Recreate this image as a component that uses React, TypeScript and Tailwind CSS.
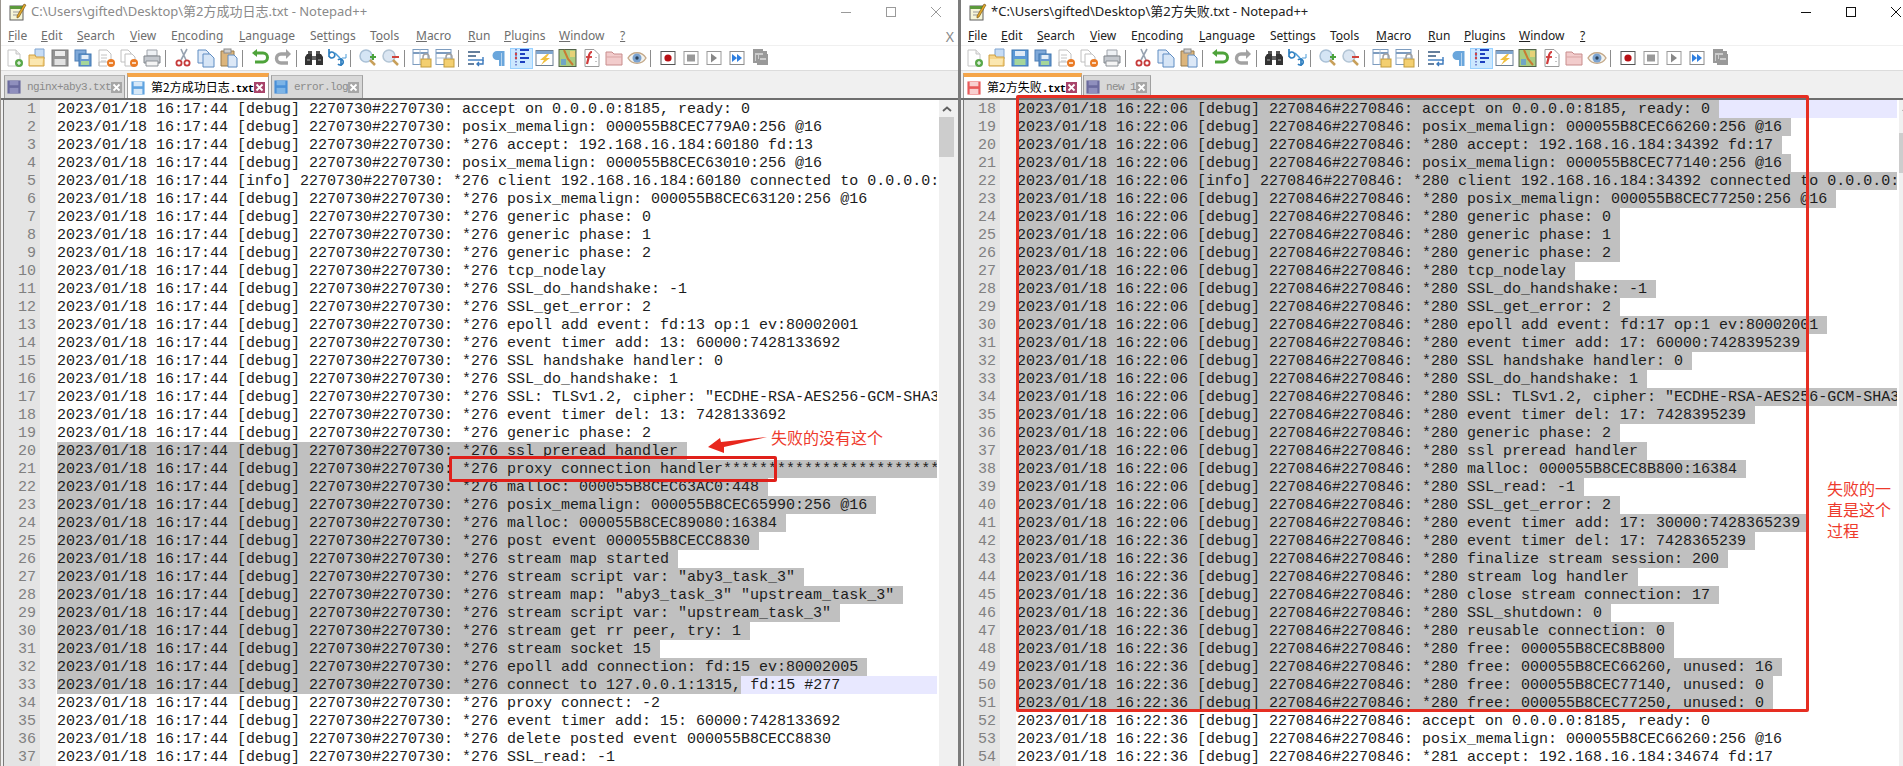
import type { ReactNode } from "react";

type Line = { n: number; text: string; sel?: number; current?: boolean };

const ALL = -1;

function buildLines(start: number, msgs: string[], prefix: (n: number) => string, selFrom: number, selTo: number) {
  return msgs.map((m, i): Line => {
    const n = start + i;
    const text = prefix(n) + m;
    return { n, text, sel: n >= selFrom && n <= selTo ? ALL : undefined };
  });
}

const leftMsgs = [
  "accept on 0.0.0.0:8185, ready: 0",
  "posix_memalign: 000055B8CEC779A0:256 @16",
  "*276 accept: 192.168.16.184:60180 fd:13",
  "posix_memalign: 000055B8CEC63010:256 @16",
  "*276 client 192.168.16.184:60180 connected to 0.0.0.0:8185",
  "*276 posix_memalign: 000055B8CEC63120:256 @16",
  "*276 generic phase: 0",
  "*276 generic phase: 1",
  "*276 generic phase: 2",
  "*276 tcp_nodelay",
  "*276 SSL_do_handshake: -1",
  "*276 SSL_get_error: 2",
  "*276 epoll add event: fd:13 op:1 ev:80002001",
  "*276 event timer add: 13: 60000:7428133692",
  "*276 SSL handshake handler: 0",
  "*276 SSL_do_handshake: 1",
  '*276 SSL: TLSv1.2, cipher: "ECDHE-RSA-AES256-GCM-SHA384 TLSv1.2',
  "*276 event timer del: 13: 7428133692",
  "*276 generic phase: 2",
  "*276 ssl preread handler",
  "*276 proxy connection handler****************************************",
  "*276 malloc: 000055B8CEC63AC0:448",
  "*276 posix_memalign: 000055B8CEC65990:256 @16",
  "*276 malloc: 000055B8CEC89080:16384",
  "*276 post event 000055B8CECC8830",
  "*276 stream map started",
  '*276 stream script var: "aby3_task_3"',
  '*276 stream map: "aby3_task_3" "upstream_task_3"',
  '*276 stream script var: "upstream_task_3"',
  "*276 stream get rr peer, try: 1",
  "*276 stream socket 15",
  "*276 epoll add connection: fd:15 ev:80002005",
  "*276 connect to 127.0.0.1:1315, fd:15 #277",
  "*276 proxy connect: -2",
  "*276 event timer add: 15: 60000:7428133692",
  "*276 delete posted event 000055B8CECC8830",
  "*276 SSL_read: -1",
];

const rightMsgs = [
  "accept on 0.0.0.0:8185, ready: 0",
  "posix_memalign: 000055B8CEC66260:256 @16",
  "*280 accept: 192.168.16.184:34392 fd:17",
  "posix_memalign: 000055B8CEC77140:256 @16",
  "*280 client 192.168.16.184:34392 connected to 0.0.0.0:8185",
  "*280 posix_memalign: 000055B8CEC77250:256 @16",
  "*280 generic phase: 0",
  "*280 generic phase: 1",
  "*280 generic phase: 2",
  "*280 tcp_nodelay",
  "*280 SSL_do_handshake: -1",
  "*280 SSL_get_error: 2",
  "*280 epoll add event: fd:17 op:1 ev:80002001",
  "*280 event timer add: 17: 60000:7428395239",
  "*280 SSL handshake handler: 0",
  "*280 SSL_do_handshake: 1",
  '*280 SSL: TLSv1.2, cipher: "ECDHE-RSA-AES256-GCM-SHA384 TLSv1.2',
  "*280 event timer del: 17: 7428395239",
  "*280 generic phase: 2",
  "*280 ssl preread handler",
  "*280 malloc: 000055B8CEC8B800:16384",
  "*280 SSL_read: -1",
  "*280 SSL_get_error: 2",
  "*280 event timer add: 17: 30000:7428365239",
  "*280 event timer del: 17: 7428365239",
  "*280 finalize stream session: 200",
  "*280 stream log handler",
  "*280 close stream connection: 17",
  "*280 SSL_shutdown: 0",
  "*280 reusable connection: 0",
  "*280 free: 000055B8CEC8B800",
  "*280 free: 000055B8CEC66260, unused: 16",
  "*280 free: 000055B8CEC77140, unused: 0",
  "*280 free: 000055B8CEC77250, unused: 0",
  "accept on 0.0.0.0:8185, ready: 0",
  "posix_memalign: 000055B8CEC66260:256 @16",
  "*281 accept: 192.168.16.184:34674 fd:17",
];

const leftLines = buildLines(
  1,
  leftMsgs,
  (n) => `2023/01/18 16:17:44 [${n === 5 ? "info" : "debug"}] 2270730#2270730: `,
  20,
  33
);
leftLines[32].sel = leftLines[32].text.indexOf(" fd:15");
leftLines[32].current = true;

const rightLines = buildLines(
  18,
  rightMsgs,
  (n) => `2023/01/18 ${n <= 41 ? "16:22:06" : "16:22:36"} [${n === 22 ? "info" : "debug"}] 2270846#2270846: `,
  18,
  51
);
rightLines[0].current = true;

const menus: [string, string, string, string][] = [
  ["", "F", "ile", "w-[33px]"],
  ["", "E", "dit", "w-[36px]"],
  ["", "S", "earch", "w-[53px]"],
  ["", "V", "iew", "w-[41px]"],
  ["E", "n", "coding", "w-[68px]"],
  ["", "L", "anguage", "w-[71px]"],
  ["Se", "t", "tings", "w-[60px]"],
  ["T", "o", "ols", "w-[46px]"],
  ["", "M", "acro", "w-[52px]"],
  ["", "R", "un", "w-[36px]"],
  ["", "P", "lugins", "w-[55px]"],
  ["", "W", "indow", "w-[61px]"],
  ["", "?", "", "w-[12px]"],
];

function Ico({ children }: { children: ReactNode }) {
  return (
    <svg viewBox="0 0 20 20" className="h-5 w-5" fill="none" shapeRendering="geometricPrecision">
      {children}
    </svg>
  );
}

function Floppy({ color, label }: { color: string; label: string }) {
  return (
    <svg viewBox="0 0 16 16" className="h-[14px] w-[14px] shrink-0">
      <rect x="0.5" y="0.5" width="15" height="15" fill={color} />
      <rect x="3" y="1" width="10" height="5" fill={label} />
      <rect x="3" y="9" width="10" height="6" fill={label} />
    </svg>
  );
}

const toolbarIcons = (dirty: boolean): ReactNode[][] => [
  [
    <Ico>
      <path d="M4 2h8l4 4v12H4z" fill="#fff" stroke="#c4c4c4" />
      <path d="M12 2v4h4" stroke="#c4c4c4" fill="#eee" />
      <circle cx="15" cy="15" r="4" fill="#5aa84a" />
      <path d="M13 15h4M15 13v4" stroke="#fff" strokeWidth="1.2" />
    </Ico>,
    <Ico>
      <path d="M8 1h9v10H8z" fill="#c6dcf5" stroke="#7ea3d0" />
      <path d="M2 7h6l1 2h8v9H2z" fill="#f6d58a" stroke="#d0a040" />
      <path d="M3 11h13l-1 6H3z" fill="#fbe7b0" />
    </Ico>,
    dirty ? (
      <Ico>
        <rect x="2" y="2" width="16" height="16" fill="#5b98d6" stroke="#3a74b0" />
        <rect x="5" y="3" width="10" height="5" fill="#dfeaf6" />
        <rect x="4.5" y="11" width="11" height="6" fill="#a6d69a" />
      </Ico>
    ) : (
      <Ico>
        <rect x="2" y="2" width="16" height="16" fill="#939393" stroke="#7a7a7a" />
        <rect x="5" y="3" width="10" height="5" fill="#ececec" />
        <rect x="4.5" y="11" width="11" height="6" fill="#e2e2e2" />
      </Ico>
    ),
    <Ico>
      <rect x="2" y="2" width="11" height="11" fill="#7fa9d9" stroke="#4f7fb5" />
      <rect x="6" y="6" width="12" height="12" fill="#6a9ad0" stroke="#3f76b0" />
      <rect x="8.5" y="7" width="7" height="4" fill="#e4eef8" />
      <rect x="8" y="13" width="8" height="4" fill="#a6d69a" />
    </Ico>,
    <Ico>
      <path d="M3 2h8l4 4v8H3v4" fill="#fff" stroke="#c0c0c0" />
      <path d="M3 2v16h8" stroke="#c0c0c0" />
      <path d="M5 7h6M5 10h6M5 13h5" stroke="#c4c4c4" />
      <circle cx="15" cy="15" r="4" fill="#ea7a24" />
      <path d="M13 15h4" stroke="#fff" strokeWidth="1.4" />
    </Ico>,
    <Ico>
      <path d="M2 2h7l3 3v9H2z" fill="#fff" stroke="#c0c0c0" />
      <path d="M6 6h7l3 3v9H6z" fill="#fff" stroke="#c0c0c0" />
      <circle cx="15" cy="15" r="4" fill="#ea7a24" />
      <path d="M13 15h4" stroke="#fff" strokeWidth="1.4" />
    </Ico>,
    <Ico>
      <path d="M5 2h10v6H5z" fill="#eef1f5" stroke="#9ea3aa" />
      <path d="M2 8h16v7H2z" fill="#c4c8ce" stroke="#80858b" />
      <path d="M4 13h12v5H4z" fill="#f4f4f4" stroke="#8d9298" />
    </Ico>,
  ],
  [
    <Ico>
      <path d="M14 1L8 12M8 1l5 11" stroke="#97a2b0" strokeWidth="1.6" />
      <circle cx="6" cy="15" r="2.6" stroke="#c63a3a" strokeWidth="1.8" />
      <circle cx="14" cy="15" r="2.6" stroke="#c63a3a" strokeWidth="1.8" />
    </Ico>,
    <Ico>
      <path d="M2 2h8l3 3v10H2z" fill="#dfeaf8" stroke="#5f8cc2" />
      <path d="M7 6h7l4 4v9H7z" fill="#d6e5f6" stroke="#5f8cc2" />
    </Ico>,
    <Ico>
      <path d="M2 3h13v15H2z" fill="#dcb57c" stroke="#987a48" />
      <rect x="5" y="1" width="7" height="4" fill="#cfcfcf" stroke="#8a8a8a" />
      <path d="M9 7h6l3 3v9H9z" fill="#dce8f7" stroke="#5f8cc2" />
    </Ico>,
  ],
  [
    <Ico>
      <path d="M6 5h7a4 4 0 0 1 0 9H5" stroke="#4ea33a" strokeWidth="3" />
      <path d="M7 1L2 5l5 4z" fill="#4ea33a" />
    </Ico>,
    <Ico>
      <path d="M14 6H8a4 4 0 0 0 0 9h7" stroke="#a2a2a2" strokeWidth="3.4" />
      <path d="M13 1l5 5-5 5z" fill="#a2a2a2" />
    </Ico>,
  ],
  [
    <Ico>
      <path d="M3 6h5v11H1V9zM12 6h5l2 3v8h-7z" fill="#333" />
      <path d="M4 3h4v3H4zM12 3h4v3h-4z" fill="#555" />
      <rect x="8" y="8" width="4" height="4" fill="#666" />
      <path d="M3 12h3M14 12h3" stroke="#aaa" />
    </Ico>,
    <Ico>
      <path d="M2 1v8M2 6a3 3 0 1 1 0 2" stroke="#2f7fc0" strokeWidth="1.7" />
      <path d="M11 12a3 3 0 1 1 0 4M14 10v8" stroke="#2f7fc0" strokeWidth="1.7" />
      <path d="M8 5l5 5" stroke="#4a9bd8" strokeWidth="1.5" />
      <path d="M15 10h4v-4" stroke="#4a9bd8" strokeWidth="1" />
    </Ico>,
  ],
  [
    <Ico>
      <circle cx="8" cy="8" r="6" fill="#d5e5f5" stroke="#a9c0d6" strokeWidth="1.5" />
      <path d="M12 12l5 5" stroke="#c8a05a" strokeWidth="2.5" />
      <path d="M12 9h6M15 6v6" stroke="#4aa23c" strokeWidth="2" />
    </Ico>,
    <Ico>
      <circle cx="8" cy="8" r="6" fill="#dbe6f2" stroke="#b3c5d5" strokeWidth="1.5" />
      <path d="M12 12l5 5" stroke="#c8a05a" strokeWidth="2.5" />
      <path d="M11 9h7" stroke="#d0443c" strokeWidth="2" />
    </Ico>,
  ],
  [
    <Ico>
      <rect x="1" y="1.5" width="15" height="15" fill="#fff" stroke="#7d9cbf" />
      <path d="M1 5h15" stroke="#7d9cbf" strokeWidth="2" />
      <path d="M8 1.5v15" stroke="#a8bfd6" />
      <rect x="9" y="11" width="10" height="8" fill="#f3cf70" stroke="#c39c3c" />
      <path d="M11 11V9a3 3 0 0 1 6 0v2" stroke="#a2a2a2" strokeWidth="1.5" />
    </Ico>,
    <Ico>
      <rect x="1" y="1.5" width="15" height="15" fill="#fff" stroke="#7d9cbf" />
      <path d="M1 5h15" stroke="#7d9cbf" strokeWidth="2" />
      <path d="M1 10h15" stroke="#a8bfd6" />
      <rect x="9" y="11" width="10" height="8" fill="#f3cf70" stroke="#c39c3c" />
      <path d="M11 11V9a3 3 0 0 1 6 0v2" stroke="#a2a2a2" strokeWidth="1.5" />
    </Ico>,
  ],
  [
    <Ico>
      <path d="M2 4h12M2 8h8M2 16h6" stroke="#34577e" strokeWidth="1.5" />
      <path d="M2 12h15v-3" stroke="#4a85c5" strokeWidth="1.5" />
      <path d="M17 12v4h-6M13 14l-2 2 2 2" stroke="#3a78bb" strokeWidth="1.4" />
    </Ico>,
    <Ico>
      <path d="M15 3H8a4 4 0 0 0 0 9h2v6h2.5V5H13v13h2.5V3z" fill="#6aa6dc" />
    </Ico>,
    <Ico>
      <path d="M8 2h9M8 6h5M8 10h9M8 14h5" stroke="#1d3fc0" strokeWidth="1.8" />
      <path d="M4 1v18" stroke="#2a2a9a" strokeDasharray="1.5 1.5" />
      <circle cx="4" cy="6" r="1.2" fill="#d04040" />
      <circle cx="4" cy="10" r="1.2" fill="#d04040" />
    </Ico>,
    <Ico>
      <rect x="1" y="2.5" width="17" height="15" fill="#fff" stroke="#6d7f92" />
      <path d="M1 4.5h17" stroke="#7fa5cf" strokeWidth="3" />
      <path d="M12 6L5 12h4l-3 5 9-7h-4l3-4z" fill="#f0c040" />
    </Ico>,
    <Ico>
      <rect x="1" y="1.5" width="17" height="17" fill="#a9cc7f" stroke="#52624a" />
      <path d="M6 2l4 9 5 6" stroke="#c97a32" strokeWidth="2" />
      <path d="M12 3h5v6h-5z" fill="#e6d278" />
      <path d="M3 11h5v6H3z" fill="#70a6c6" />
    </Ico>,
    <Ico>
      <path d="M4 1.5h9l5 5v12H4z" fill="#fff" stroke="#9a9a9a" />
      <path d="M11 4c-3 0-3 3-3.500 6L6 16" stroke="#d03c3c" strokeWidth="2.2" />
      <path d="M5 9h6" stroke="#d03c3c" strokeWidth="1.8" />
      <path d="M15 9v1M15 13v1" stroke="#888" />
    </Ico>,
    <Ico>
      <path d="M2 4h6l2 2h8v11H2z" fill="#f2cccc" stroke="#c88c8c" />
      <path d="M2 9h16" stroke="#d9a5a5" />
    </Ico>,
    <Ico>
      <path d="M1 10c4-7 14-7 18 0-4 7-14 7-18 0z" fill="#f2f2ee" stroke="#c4a98a" strokeWidth="1.4" />
      <circle cx="10" cy="10" r="4.500" fill="#7ba2cf" />
      <circle cx="10" cy="10" r="1.700" fill="#2d4257" />
    </Ico>,
  ],
  [
    <Ico>
      <rect x="3" y="3.500" width="14" height="13" fill="#fff" stroke="#555" />
      <circle cx="10" cy="10" r="3.600" fill="#b80f14" />
    </Ico>,
    <Ico>
      <rect x="3" y="3.500" width="14" height="13" fill="#fff" stroke="#999" />
      <rect x="6" y="6.500" width="8" height="7" fill="#999" />
    </Ico>,
    <Ico>
      <rect x="3" y="3.500" width="14" height="13" fill="#fff" stroke="#999" />
      <path d="M7 5.500l6 4.500-6 4.500z" fill="#888" />
    </Ico>,
    <Ico>
      <rect x="3" y="3.500" width="14" height="13" fill="#fff" stroke="#8c8c8c" />
      <path d="M5 6l5 4-5 4zM10 6l5 4-5 4z" fill="#2f7fe0" />
    </Ico>,
    <Ico>
      <path d="M3 1h10v2h4v3h1v11H7v-2H3z" fill="#999" />
      <path d="M5 6h8M5 8h1M8 8h1M5 10h1M8 10h1M5 12h1M10 11h6" stroke="#fff" />
    </Ico>,
  ],
];

function Toolbar({ dirty }: { dirty: boolean }) {
  const groups = toolbarIcons(dirty);
  return (
    <div className="flex h-[25px] items-center border-b border-[#dcdcdc] bg-white pl-px">
      {groups.map((group, g) => (
        <div key={g} className="flex items-center">
          {g > 0 && (
            <div className="w-2">
              <div className="ml-[2px] h-[17px] w-px bg-[#8c8c8c]" />
            </div>
          )}
          {group.map((icon, i) => (
            <div
              key={i}
              className={`flex h-[21px] w-[23px] items-center justify-center border ${
                g === 6 && i === 2 ? "border-[#99d1ff] bg-[#cce8ff]" : "border-transparent"
              }`}
            >
              {icon}
            </div>
          ))}
        </div>
      ))}
    </div>
  );
}

function Tab({
  cjk,
  latin,
  width,
  active,
  floppy,
  label,
}: {
  cjk?: string;
  latin: string;
  width: string;
  active?: boolean;
  floppy: string;
  label: string;
}) {
  return (
    <div
      className={`flex items-center overflow-hidden border-x border-[#a0a0a0] ${width} ${
        active
          ? "h-[25px] border-t-[4px] border-t-[#f5a549] bg-white pl-[3px] pr-[4px] text-black"
          : "h-[23px] border-t border-t-[#b4b4b4] bg-[#d8d8d8] pl-[2px] pr-[3px] text-[#8a8a8a]"
      }`}
    >
      <Floppy color={floppy} label={label} />
      <span className="ml-[6px] flex-1 whitespace-pre font-['Liberation_Mono',monospace] text-[11px] tracking-[-0.6px]">
        {cjk && (
          <span className="font-['Noto_Sans_CJK_SC',sans-serif] text-[12px] tracking-normal">{cjk}</span>
        )}
        <span className={active ? "font-bold" : ""}>{latin}</span>
      </span>
      <span
        className={`flex h-[11px] w-[11px] shrink-0 items-center justify-center ${
          active ? "bg-[#a8446a]" : "bg-[#a6a6a6]"
        }`}
      >
        <svg viewBox="0 0 9 9" className="h-[9px] w-[9px]">
          <path d="M1.500 1.500l6 6M7.500 1.500l-6 6" stroke="#fff" strokeWidth="1.800" />
        </svg>
      </span>
    </div>
  );
}

function EditorRow({ line }: { line: Line }) {
  const selected = line.sel === undefined ? "" : line.sel === ALL ? line.text + " " : line.text.slice(0, line.sel);
  const rest = line.sel === undefined ? line.text : line.sel === ALL ? "" : line.text.slice(line.sel);
  return (
    <div className="flex h-[18px] overflow-hidden leading-[20px]">
      <div className="w-9 shrink-0 bg-[#e4e4e4] pr-[4px] text-right text-[#808080]">{line.n}</div>
      <div className="w-4 shrink-0 bg-[#f1f1f1]" />
      <div className="w-px shrink-0" />
      <div className={`min-w-0 flex-1 overflow-hidden whitespace-pre ${line.current ? "bg-[#e8e8ff]" : ""}`}>
        {selected && <span className="inline-block h-[18px] bg-[#c0c0c0] align-top">{selected}</span>}
        {rest}
      </div>
    </div>
  );
}

function Window({
  title,
  active,
  lines,
  tabs,
  thumb,
  dirty,
}: {
  title: string;
  active: boolean;
  lines: Line[];
  tabs: ReactNode;
  thumb: string;
  dirty: boolean;
}) {
  const ctl = active ? "#111" : "#9a9a9a";
  return (
    <div className="flex w-[957px] shrink-0 flex-col bg-white">
      <div className="flex h-[27px] items-center pb-[3px]">
        <svg viewBox="0 0 18 18" className="ml-2 h-[18px] w-[18px] shrink-0">
          <rect x="1" y="3" width="13" height="14" fill="#f6f6d8" stroke="#5f5f5f" />
          <path d="M1 3h13v3H1z" fill="#5c9a3c" />
          <path d="M4 9h7M4 12h5" stroke="#999" />
          <path d="M8 13L15 1l2 1-7 12-2 1z" fill="#e2a92a" stroke="#6a4a10" strokeWidth="0.6" />
        </svg>
        <span
          className={`ml-[4px] whitespace-pre font-['Noto_Sans','Noto_Sans_CJK_SC',sans-serif] text-[13px] ${
            active ? "text-[#222]" : "text-[#8a8a8a]"
          }`}
        >
          {title}
        </span>
        <div className="ml-auto flex h-full">
          <div className="flex w-[45px] items-center justify-center">
            <div className="h-px w-[10px]" style={{ backgroundColor: ctl }} />
          </div>
          <div className="flex w-[45px] items-center justify-center">
            <div className="h-[10px] w-[10px] border" style={{ borderColor: ctl }} />
          </div>
          <div className="flex w-[45px] items-center justify-center">
            <svg viewBox="0 0 10 10" className="h-[10px] w-[10px]">
              <path d="M0 0l10 10M10 0L0 10" stroke={ctl} strokeWidth="1" />
            </svg>
          </div>
        </div>
      </div>

      <div className="flex h-[19px] items-center border-b border-[#f0f0f0] pl-[7px] font-['Noto_Sans',sans-serif] text-[12px] text-[#222]">
        {menus.map(([pre, key, post, width]) => (
          <span key={pre + key + post} className={`${width} shrink-0 whitespace-pre ${active ? "" : "text-[#6e6e6e]"}`}>
            {pre}
            <span className="underline">{key}</span>
            {post}
          </span>
        ))}
        <span className="ml-auto mr-[4px] text-[14px] text-[#8a8a8a]">X</span>
      </div>

      <Toolbar dirty={dirty} />

      <div className="flex h-[27px] items-end bg-[#f0f0f0]">{tabs}</div>

      <div className="flex min-h-0 flex-1 border-t-2 border-t-[#6e6e6e] font-['Liberation_Mono',monospace] text-[15px] text-[#1c1c1c]">
        <div className="w-[2px] shrink-0 bg-[#f0f0f0]" />
        <div className="w-px shrink-0 bg-[#7a7a7a]" />
        <div className="min-w-0 flex-1 overflow-hidden">
          {lines.map((line) => (
            <EditorRow key={line.n} line={line} />
          ))}
        </div>
        <div className="w-[2px] shrink-0 bg-white" />
        <div className="flex w-[15px] shrink-0 flex-col bg-[#f0f0f0]">
          <div className="flex h-[17px] shrink-0 items-center justify-center">
            <svg viewBox="0 0 10 6" className="h-[6px] w-[10px]">
              <path d="M1 5l4-3.500L9 5" stroke={active ? "#505050" : "#606060"} strokeWidth="1.800" fill="none" />
            </svg>
          </div>
          <div className={`w-full bg-[#cdcdcd] ${thumb}`} />
        </div>
        <div className="w-[4px] shrink-0 bg-[#f0f0f0]" />
      </div>
    </div>
  );
}

export default function App() {
  return (
    <div className="relative flex h-[766px] w-[1903px] overflow-hidden bg-white">
      <div className="w-px shrink-0 bg-[#9b9690]" />
      <Window
        title="C:\Users\gifted\Desktop\第2方成功日志.txt - Notepad++"
        active={false}
        lines={leftLines}
        dirty={false}
        thumb="h-[40px]"
        tabs={
          <div className="flex items-end gap-[2px] pl-[3px]">
            <Tab latin="nginx+aby3.txt" width="w-[121px]" floppy="#6a6a9e" label="#8f8fbd" />
            <Tab cjk="第2方成功日志" latin=".txt" width="w-[142px]" active floppy="#5fa3e0" label="#d6e8f8" />
            <Tab latin="error.log" width="w-[92px]" floppy="#4a90d8" label="#7db4e6" />
          </div>
        }
      />
      <div className="w-[3px] shrink-0 bg-[#7c7c7c]" />
      <Window
        title="*C:\Users\gifted\Desktop\第2方失败.txt - Notepad++"
        active
        lines={rightLines}
        dirty
        thumb="mt-[16px] h-[40px]"
        tabs={
          <div className="flex items-end gap-px pl-[2px]">
            <Tab cjk="第2方失败" latin=".txt" width="w-[119px]" active floppy="#e85a5a" label="#f8d0d0" />
            <Tab latin="new 1" width="w-[68px]" floppy="#6a6a9e" label="#8f8fbd" />
          </div>
        }
      />

      {/* hand-drawn notes on the screenshot */}
      <div className="absolute left-[449px] top-[456px] h-[26px] w-[328px] rounded-[2px] border-[3px] border-[#e0201a]" />
      <svg viewBox="0 0 64 20" className="absolute left-[706px] top-[435px] h-5 w-16">
        <path d="M2 12L14 3l1 4L61 2 18 12l0 6z" fill="#e8281e" />
      </svg>
      <span className="absolute left-[771px] top-[427px] font-['Noto_Sans_CJK_SC',sans-serif] text-[16px] leading-[21px] text-[#ee3a2c]">
        失败的没有这个
      </span>
      <div className="absolute left-[1016px] top-[95px] h-[617px] w-[793px] rounded-[2px] border-[3px] border-[#e62e22]" />
      <span className="absolute left-[1827px] top-[478px] w-[66px] font-['Noto_Sans_CJK_SC',sans-serif] text-[16px] leading-[21px] text-[#ee3a2c]">
        失败的一直是这个过程
      </span>
    </div>
  );
}
